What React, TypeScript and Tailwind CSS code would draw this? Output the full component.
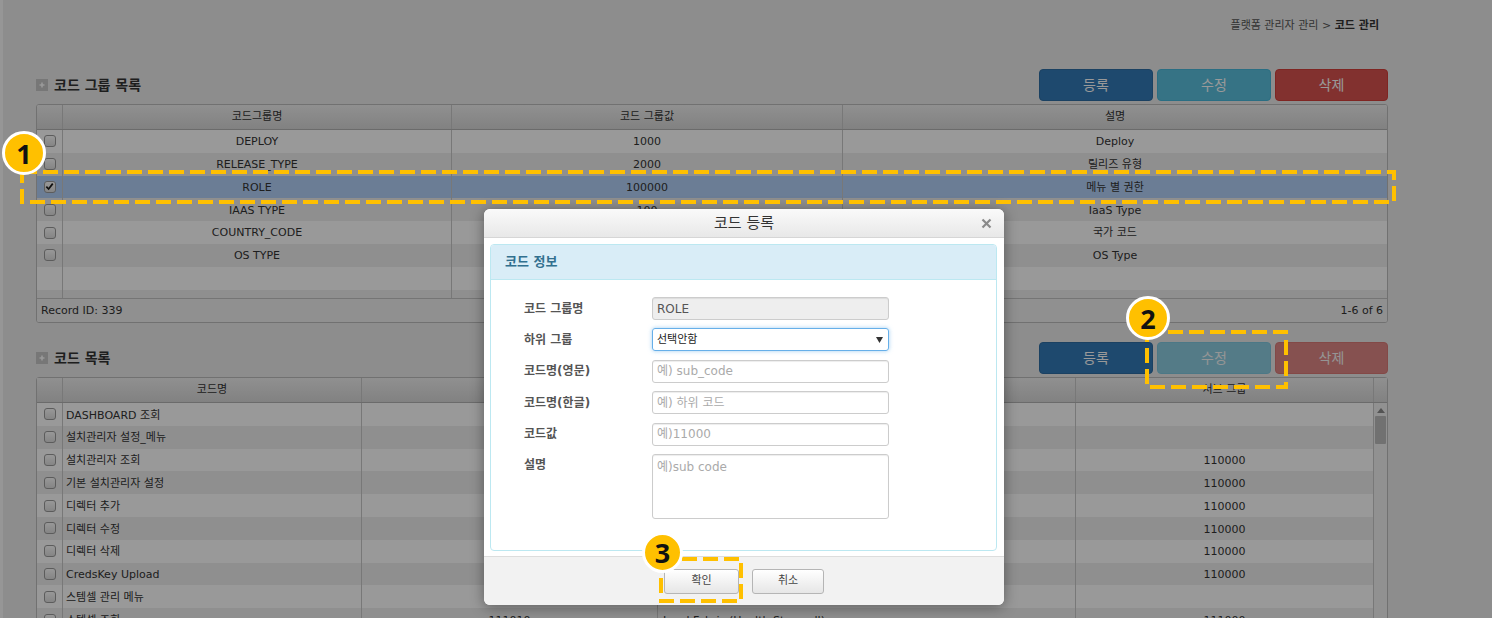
import React from "react";

const FONT = "font-['DejaVu_Sans','Noto_Sans_CJK_KR',sans-serif]";

function Check({ checked }: { checked?: boolean }) {
  return (
    <div className="w-[12px] h-[12px] rounded-[3px] border border-[#9a9a9a] bg-gradient-to-b from-[#fdfdfd] to-[#dedede] flex items-center justify-center">
      {checked && (
        <svg width="9" height="9" viewBox="0 0 10 10">
          <path d="M1.5 5.2 L4 7.8 L8.6 1.8" stroke="#1a1a1a" strokeWidth="1.9" fill="none" />
        </svg>
      )}
    </div>
  );
}

function SectionTitle({ text }: { text: string }) {
  return (
    <div className="flex items-center gap-[6px]">
      <div className="w-[12px] h-[12px] bg-[#c6c6c6] flex items-center justify-center">
        <svg width="8" height="8" viewBox="0 0 8 8">
          <path d="M4 1.5 V6.5 M1.5 4 H6.5" stroke="#ffffff" strokeWidth="1.6" />
        </svg>
      </div>
      <span className="text-[14px] font-bold text-[#333]">{text}</span>
    </div>
  );
}

function Btn({ label, color, disabled, w }: { label: string; color: string; disabled?: boolean; w: string }) {
  return (
    <div className={`${w} h-[32px] rounded-[4px] border ${color} ${disabled ? "opacity-65" : ""} flex items-center justify-center text-[14px] text-white`}>
      {label}
    </div>
  );
}

function Buttons({ disabled }: { disabled?: boolean }) {
  return (
    <div className="flex gap-[4px]">
      <Btn w="w-[114px]" label="등록" color="bg-[#337ab7] border-[#2e6da4]" />
      <Btn w="w-[114px]" label="수정" color="bg-[#5bc0de] border-[#46b8da]" disabled={disabled} />
      <Btn w="w-[113px]" label="삭제" color="bg-[#d9534f] border-[#d43f3a]" disabled={disabled} />
    </div>
  );
}

const groups = [
  { name: "DEPLOY", value: "1000", desc: "Deploy" },
  { name: "RELEASE_TYPE", value: "2000", desc: "릴리즈 유형" },
  { name: "ROLE", value: "100000", desc: "메뉴 별 권한", selected: true },
  { name: "IAAS TYPE", value: "100", desc: "IaaS Type" },
  { name: "COUNTRY_CODE", value: "200", desc: "국가 코드" },
  { name: "OS TYPE", value: "300", desc: "OS Type" },
];

const codes = [
  { name: "DASHBOARD 조회", value: "100010", desc: "Dashboard", sub: "" },
  { name: "설치관리자 설정_메뉴", value: "110000", desc: "Install Manager Menu", sub: "" },
  { name: "설치관리자 조회", value: "110010", desc: "Install Manager List", sub: "110000" },
  { name: "기본 설치관리자 설정", value: "110011", desc: "Default Install Manager", sub: "110000" },
  { name: "디렉터 추가", value: "110012", desc: "Director Create", sub: "110000" },
  { name: "디렉터 수정", value: "110013", desc: "Director Update", sub: "110000" },
  { name: "디렉터 삭제", value: "110014", desc: "Director Delete", sub: "110000" },
  { name: "CredsKey Upload", value: "110015", desc: "CredsKey Upload", sub: "110000" },
  { name: "스템셀 관리 메뉴", value: "111000", desc: "Stemcell Menu", sub: "" },
  { name: "스템셀 조회", value: "111010", desc: "Load Fabric (Health Stemcell)", sub: "111000" },
];

const HEAD = "bg-gradient-to-b from-[#f0f0f0] to-[#d8d8d8] border-b border-[#b3b3b3]";
const VL = "border-r border-[#c8c8c8]";

function GroupTable() {
  return (
    <div className="mt-[3px] h-[219px] border border-[#bdbdbd] rounded-[3px] bg-white flex flex-col overflow-hidden text-[11px] text-[#333]">
      <div className={`h-[25px] flex ${HEAD}`}>
        <div className={`w-[26px] ${VL}`} />
        <div className={`w-[389px] ${VL} flex items-center justify-center`}>코드그룹명</div>
        <div className={`w-[391px] ${VL} flex items-center justify-center`}>코드 그룹값</div>
        <div className="flex-1 flex items-center justify-center">설명</div>
      </div>
      <div className="flex-1 flex flex-col">
        {groups.map((g, i) => (
          <div
            key={g.name}
            className={`h-[22.8px] flex ${g.selected ? "bg-[#b3d1f8]" : i % 2 === 0 ? "bg-white" : "bg-[#efefef]"}`}
          >
            <div className={`w-[26px] ${VL} flex items-center justify-center`}>
              <Check checked={g.selected} />
            </div>
            <div className={`w-[389px] ${VL} flex items-center justify-center pt-[2px]`}>{g.name}</div>
            <div className={`w-[391px] ${VL} flex items-center justify-center pt-[2px]`}>{g.value}</div>
            <div className="flex-1 flex items-center justify-center pt-[2px]">{g.desc}</div>
          </div>
        ))}
        <div className="h-[22.8px] flex bg-white">
          <div className={`w-[26px] ${VL}`} />
          <div className={`w-[389px] ${VL}`} />
          <div className={`w-[391px] ${VL}`} />
          <div className="flex-1" />
        </div>
        <div className="flex-1 flex bg-[#efefef]">
          <div className={`w-[26px] ${VL}`} />
          <div className={`w-[389px] ${VL}`} />
          <div className={`w-[391px] ${VL}`} />
          <div className="flex-1" />
        </div>
      </div>
      <div className="h-[24px] border-t border-[#c4c4c4] bg-[#f0f0f0] flex items-center justify-between px-[4px] pt-[1px]">
        <span>Record ID: 339</span>
        <span>1-6 of 6</span>
      </div>
    </div>
  );
}

function CodeTable() {
  return (
    <div className="mt-[3px] border border-[#bdbdbd] rounded-[3px] bg-white flex flex-col text-[11px] text-[#333]">
      <div className={`h-[25px] flex ${HEAD}`}>
        <div className={`w-[26px] ${VL}`} />
        <div className={`w-[299px] ${VL} flex items-center justify-center`}>코드명</div>
        <div className={`w-[296px] ${VL} flex items-center justify-center`}>코드값</div>
        <div className={`w-[418px] ${VL} flex items-center justify-center`}>설명</div>
        <div className={`w-[298px] ${VL} flex items-center justify-center`}>서브 그룹</div>
        <div className="flex-1" />
      </div>
      <div className="flex">
        <div className="flex flex-col">
          {codes.map((c, i) => (
            <div key={c.name} className={`h-[22.8px] flex ${i % 2 === 0 ? "bg-white" : "bg-[#efefef]"}`}>
              <div className={`w-[26px] ${VL} flex items-center justify-center`}>
                <Check />
              </div>
              <div className={`w-[299px] ${VL} flex items-center pl-[3px] pt-[3px]`}>{c.name}</div>
              <div className={`w-[296px] ${VL} flex items-center justify-center pt-[3px]`}>{c.value}</div>
              <div className={`w-[418px] ${VL} flex items-center pl-[5px] pt-[3px]`}>{c.desc}</div>
              <div className={`w-[298px] ${VL} flex items-center justify-center pt-[3px]`}>{c.sub}</div>
            </div>
          ))}
        </div>
        <div className="flex-1 bg-[#f2f2f2] flex flex-col items-center pt-[5px]">
          <svg width="8" height="5" viewBox="0 0 8 5">
            <path d="M0 5 L4 0 L8 5 Z" fill="#8a8a8a" />
          </svg>
          <div className="mt-[3px] w-[11px] h-[28px] bg-[#bdbdbd] rounded-[1px]" />
        </div>
      </div>
    </div>
  );
}

function Field({ label, children }: { label: string; children: React.ReactNode }) {
  return (
    <div className="flex items-start">
      <div className="w-[128px] h-[23px] flex items-center text-[12px] font-bold text-[#555]">{label}</div>
      {children}
    </div>
  );
}

const INPUT =
  "w-[237px] h-[23px] border border-[#cccccc] rounded-[3px] px-[4px] flex items-center text-[12px] shadow-[inset_0_1px_1px_rgba(0,0,0,0.075)]";

function Dialog() {
  return (
    <div className={`absolute left-[484px] top-[209px] w-[520px] h-[396px] bg-white rounded-[6px] shadow-[0_2px_14px_rgba(0,0,0,0.4)] flex flex-col overflow-hidden ${FONT}`}>
      <div className="h-[29px] grid grid-cols-[1fr_auto_1fr] items-center bg-gradient-to-b from-[#fafafa] to-[#e8e8e8] border-b border-[#d6d6d6]">
        <div />
        <span className="text-[15px] text-[#333]">코드 등록</span>
        <div className="flex justify-end pr-[12px]">
          <svg width="11" height="11" viewBox="0 0 11 11">
            <path d="M1.5 1.5 L9.5 9.5 M9.5 1.5 L1.5 9.5" stroke="#8a8a8a" strokeWidth="2.2" />
          </svg>
        </div>
      </div>
      <div className="flex-1 pt-[6px] pl-[6px] pr-[7px] pb-[5px]">
        <div className="h-full border border-[#bce8f1] rounded-[4px] flex flex-col">
          <div className="h-[35px] bg-[#d9edf7] border-b border-[#bce8f1] rounded-t-[3px] flex items-center pl-[14px] text-[13px] font-bold text-[#31708f]">
            코드 정보
          </div>
          <div className="pt-[17px] pl-[33px] flex flex-col gap-[8.4px]">
            <Field label="코드 그룹명">
              <div className={`${INPUT} bg-[#eeeeee] text-[#555] text-[11.5px]`}>ROLE</div>
            </Field>
            <Field label="하위 그룹">
              <div className="w-[237px] h-[23px] border border-[#66afe9] rounded-[3px] pl-[4px] pr-[5px] flex items-center justify-between text-[11px] text-[#222] shadow-[0_0_4px_rgba(102,175,233,0.6)]">
                <span>선택안함</span>
                <svg width="7" height="6" viewBox="0 0 7 6">
                  <path d="M0 0 L7 0 L3.5 6 Z" fill="#333" />
                </svg>
              </div>
            </Field>
            <Field label="코드명(영문)">
              <div className={`${INPUT} text-[#aaa]`}>예) sub_code</div>
            </Field>
            <Field label="코드명(한글)">
              <div className={`${INPUT} text-[#aaa]`}>예) 하위 코드</div>
            </Field>
            <Field label="코드값">
              <div className={`${INPUT} text-[#aaa]`}>예)11000</div>
            </Field>
            <Field label="설명">
              <div className="w-[237px] h-[65px] border border-[#cccccc] rounded-[3px] px-[4px] pt-[3px] text-[12px] text-[#aaa] shadow-[inset_0_1px_1px_rgba(0,0,0,0.075)]">
                예)sub code
              </div>
            </Field>
          </div>
        </div>
      </div>
      <div className="h-[49px] border-t border-[#dddddd] bg-[#f2f2f2] flex justify-center pt-[12px] gap-[13px]">
        <div className="w-[75px] h-[25px] border border-[#b5b5b5] rounded-[3px] bg-gradient-to-b from-white to-[#e6e6e6] flex items-center justify-center text-[11px] text-[#444]">
          확인
        </div>
        <div className="w-[72px] h-[25px] border border-[#b5b5b5] rounded-[3px] bg-gradient-to-b from-white to-[#e6e6e6] flex items-center justify-center text-[11px] text-[#444]">
          취소
        </div>
      </div>
    </div>
  );
}

function Badge({ n, left, top, size }: { n: string; left: string; top: string; size: string }) {
  return (
    <div
      className={`absolute ${left} ${top} ${size} rounded-full bg-[#ffc000] border-[3px] border-white flex items-center justify-center text-[27px] font-bold text-[#111] font-['Open_Sans','Noto_Sans',sans-serif] leading-none`}
    >
      {n}
    </div>
  );
}

function Dashed({ left, top, w, h }: { left: number; top: number; w: number; h: number }) {
  return (
    <svg className="absolute" style={{ left, top }} width={w} height={h}>
      <rect x="2" y="2" width={w - 4} height={h - 4} fill="none" stroke="#ffc000" strokeWidth="4" strokeDasharray="15 6" />
    </svg>
  );
}

export default function App() {
  return (
    <div className={`relative w-[1492px] h-[618px] overflow-hidden bg-[#ebebeb] flex ${FONT}`}>
      <div className="w-[3px] bg-[#fafafa]" />
      <div className="w-[1489px] pl-[33px] pr-[104px]">
        <div className="h-[69px] pt-[18px] pr-[9px] flex justify-end items-start text-[11px] text-[#555]">
          <span>
            플랫폼 관리자 관리 &gt; <b className="text-[#333]">코드 관리</b>
          </span>
        </div>
        <div className="h-[32px] flex items-center justify-between">
          <SectionTitle text="코드 그룹 목록" />
          <Buttons />
        </div>
        <GroupTable />
        <div className="mt-[19px] h-[32px] flex items-center justify-between">
          <SectionTitle text="코드 목록" />
          <Buttons disabled />
        </div>
        <CodeTable />
      </div>

      <div className="absolute inset-0 bg-black/40" />

      <Dialog />

      <Dashed left={20} top={170} w={1376} h={34} />
      <Dashed left={1145} top={330} w={143} h={59} />
      <Dashed left={659} top={557} w={84} h={46} />

      <Badge n="1" left="left-[2px]" top="top-[131px]" size="w-[44px] h-[44px]" />
      <Badge n="2" left="left-[1126px]" top="top-[296px]" size="w-[44px] h-[44px]" />
      <Badge n="3" left="left-[642px]" top="top-[532px]" size="w-[41px] h-[41px]" />
    </div>
  );
}
